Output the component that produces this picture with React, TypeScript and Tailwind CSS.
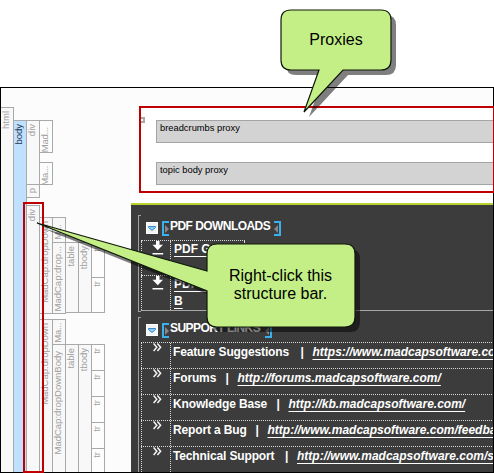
import type { ReactNode } from "react";

type BarProps = { label: string; h: string; tone?: string; className?: string; text?: string };

function Bar({ label, h, tone = "bg-[#f8f8f8] text-[#a0a0a0]", className = "", text = "" }: BarProps) {
  return (
    <div
      className={`flex w-[14px] shrink-0 items-start border border-[#a9a9a9] pt-[3px] ${h} ${tone} ${className}`}
    >
      <span className={`-ml-px rotate-180 text-[9.5px] leading-[12px] whitespace-nowrap [writing-mode:vertical-rl] ${text}`}>{label}</span>
    </div>
  );
}

const white = "bg-[#fdfdfd] text-[#a0a0a0]";
const tight = "tracking-[-0.3px]";

function Structure() {
  return (
    <div className="flex h-[384px] w-[130px] shrink-0 items-start overflow-hidden pt-[19px]">
      <Bar label="html" h="h-[380px]" className="-ml-px" />
      <Bar label="body" h="h-[380px]" tone="bg-[#c0e0ff] text-[#22384e]" className="mt-[13px] -ml-px" />
      <div className="mt-[13px] -ml-px flex flex-col">
        <Bar label="div" h="h-[65px]" />
        <Bar label="p" h="h-[14px]" className="-mt-px" />
        <Bar label="div" h="h-[280px]" className="mt-[7px]" />
      </div>
      <div className="mt-[13px] -ml-px flex flex-col">
        <Bar label="Mad..." h="h-[33px]" tone={white} text="mt-[3px] tracking-[-0.2px]" />
        <Bar label="Ma..." h="h-[23px]" tone={white} className="mt-[9px]" text={tight} />
        <Bar label="MadCap:dropDown" h="h-[97px]" className="mt-[32px]" />
        <Bar label="MadCap:dropDown" h="h-[170px]" className="mt-[5px]" />
      </div>
      <div className="mt-[110px] -ml-px flex flex-col">
        <Bar label="M..." h="h-[26px]" text="mt-[3px]" />
        <Bar label="MadCap:drop..." h="h-[72px]" className="-mt-px" />
        <Bar label="Ma..." h="h-[26px]" className="mt-[5px]" text={tight} />
        <Bar label="MadCap:dropDownBody" h="h-[150px]" className="-mt-px" text="mt-[3px]" />
      </div>
      <div className="mt-[135px] -ml-px flex flex-col">
        <Bar label="table" h="h-[71px]" />
        <Bar label="table" h="h-[150px]" className="mt-[31px]" />
      </div>
      <div className="mt-[135px] -ml-px flex flex-col">
        <Bar label="tbody" h="h-[71px]" />
        <Bar label="tbody" h="h-[150px]" className="mt-[31px]" />
      </div>
      <div className="mt-[135px] -ml-px flex flex-col">
        <Bar label="tr" h="h-[36px]" tone={white} />
        <Bar label="tr" h="h-[36px]" tone={white} className="-mt-px" />
        <Bar label="tr" h="h-[27px]" tone={white} className="mt-[31px]" />
        <Bar label="tr" h="h-[27px]" tone={white} className="-mt-px" />
        <Bar label="tr" h="h-[27px]" tone={white} className="-mt-px" />
        <Bar label="tr" h="h-[27px]" tone={white} className="-mt-px" />
        <Bar label="tr" h="h-[27px]" tone={white} className="-mt-px" />
      </div>
    </div>
  );
}

function Proxy({ children, className }: { children: ReactNode; className: string }) {
  return (
    <div className={`ml-[15px] h-[23px] border border-r-0 border-[#a4a4a4] bg-[#d3d3d3] pl-[3px] text-[9.33px] leading-[15px] text-black ${className}`}>
      {children}
    </div>
  );
}

function Heading({ children, width }: { children: string; width: string }) {
  return (
    <div className="flex h-[25px] items-start pt-[6px] pl-[5px]">
      <svg className="mt-px mr-[4px] shrink-0" width="12" height="12" viewBox="0 0 12 12">
        <rect x="0.5" y="0.5" width="11" height="11" fill="#f4f4f4" stroke="#fff" />
        <path d="M2.5 4.5H9.5V5.5L6 8.5L2.5 5.5Z" fill="#8ccdf5" stroke="#2a7fc9" strokeWidth="0.9" />
      </svg>
      <div className="flex h-[15px] w-[7px] shrink-0 items-center border-2 border-r-0 border-[#3ab0ee]">
        <svg width="5" height="8" viewBox="0 0 5 8"><path d="M1 0L5 4L1 8Z" fill="#858585" /></svg>
      </div>
      <span className={`-mt-px shrink-0 pl-px text-[12px] leading-[13px] font-bold tracking-[-0.55px] whitespace-nowrap text-white ${width}`}>{children}</span>
      <div className="flex h-[15px] w-[7px] shrink-0 items-center border-2 border-l-0 border-[#3ab0ee]">
        <svg width="5" height="8" viewBox="0 0 5 8"><path d="M4 0L0 4L4 8Z" fill="#858585" /></svg>
      </div>
    </div>
  );
}

function PdfRow({ children }: { children: ReactNode }) {
  return (
    <div className="flex h-[35px] w-[104px] border-t border-dotted border-[#d8d8d8]">
      <div className="w-[29px] shrink-0 border-l border-dotted border-[#d8d8d8] pl-[10px]">
        <svg width="12" height="14" viewBox="0 0 12 14">
          <path d="M4 0H7.5V3.7H11L5.75 9.2L0.5 3.7H4ZM0.5 12H11.2V13.4H0.5Z" fill="#fff" />
        </svg>
      </div>
      <div className="grow border-x border-dotted border-[#d8d8d8] pl-[3px] text-[12px] leading-[17px] font-bold whitespace-nowrap text-white">{children}</div>
    </div>
  );
}

const under = "underline decoration-1 underline-offset-[3px]";

const links = [
  ["Feature Suggestions", "https://www.madcapsoftware.com/bugs", "w-[117.5px]"],
  ["Forums", "http://forums.madcapsoftware.com/", "w-[42.5px]"],
  ["Knowledge Base", "http://kb.madcapsoftware.com/", "w-[93.5px]"],
  ["Report a Bug", "http://www.madcapsoftware.com/feedback", "w-[72.5px]"],
  ["Technical Support", "http://www.madcapsoftware.com/support", "w-[102px]"],
];

function LinkRow({ name, url, width }: { name: string; url: string; width: string }) {
  return (
    <div className="flex h-[26px] border-t border-dotted border-[#d8d8d8]">
      <div className="w-[29px] shrink-0 border-l border-dotted border-[#d8d8d8] pl-[11px]">
        <svg width="9" height="9" viewBox="0 0 9 9">
          <path d="M0.6 0.6L3.8 4.3L0.6 8M4.4 0.6L7.6 4.3L4.4 8" fill="none" stroke="#f4f4f4" strokeWidth="1.5" />
        </svg>
      </div>
      <div className="flex grow border-l border-dotted border-[#d8d8d8] pt-[2px] pl-[2px] text-[12px] leading-[14px] font-bold whitespace-pre text-white">
        <span className={`shrink-0 tracking-[-0.14px] ${width}`}>{name}</span>
        <span className="w-[22px] shrink-0 pl-[10px]">|</span>
        <span className={`italic ${under}`}>{url}</span>
      </div>
    </div>
  );
}

function Callouts() {
  const top = "M291 10H381Q391 10 391 20V60Q391 70 381 70H343L304 112L319 70H291Q281 70 281 60V20Q281 10 291 10Z";
  const low = "M217 244H345Q355 244 355 254V317Q355 327 345 327H217Q207 327 207 317V291L37 223L207 271V254Q207 244 217 244Z";
  return (
    <>
      <svg className="absolute inset-0" width="494" height="473" viewBox="0 0 494 473">
        {[top, low].map((d) => (
          <g key={d}>
            <path d={d} transform="translate(5 5)" fill="#000" fillOpacity="0.5" />
            <path d={d} fill="#c3ef86" stroke="#10180a" strokeWidth="1.2" />
          </g>
        ))}
      </svg>
      <div className="absolute top-[31px] left-[281px] w-[110px] text-center text-[16px] leading-[18px] text-black">Proxies</div>
      <div className="absolute top-[267px] left-[207px] w-[147px] text-center text-[16px] leading-[18px] text-black">
        Right-click this
        <br />
        structure bar.
      </div>
    </>
  );
}

export default function App() {
  return (
    <div className="relative h-[473px] w-[494px] overflow-hidden bg-white pt-[87px] font-['Liberation_Sans',Arial,sans-serif]">
      <div className="flex h-[386px] overflow-hidden border border-black bg-[#fcfcfc]">
        <Structure />
        <main className="mt-[17px] flex w-[362px] shrink-0 flex-col overflow-hidden bg-white">
          <section className="mt-px ml-[8px] h-[87px] shrink-0 border-2 border-r-0 border-[#c00000]">
            <div className="flex items-start">
              <div className="mt-[9px] h-[6px] w-[4px] border-2 border-l-0 border-[#a9a9a9]" />
              <div className="-ml-[4px] grow pt-[12px]">
                <Proxy className="">breadcrumbs proxy</Proxy>
                <Proxy className="mt-[19px]">topic body proxy</Proxy>
              </div>
            </div>
          </section>
          <section className="mt-[10px] min-h-0 grow overflow-hidden border-t-2 border-[#b9d22e] bg-[#3c3c3c] pl-[7px]">
            <div className="mt-[10px] flex h-[97px]">
              <div className="w-[3px] shrink-0 border border-r-0 border-[#a0a0a0]" />
              <div className="grow">
                <Heading width="w-[105px]">PDF DOWNLOADS</Heading>
                <PdfRow>
                  <span className={under}>PDF Guide</span>
                </PdfRow>
                <PdfRow>
                  <span className={under}>PDF Guide</span>
                  <br />
                  <span className={under}>B</span>
                </PdfRow>
                <div className="h-px bg-[#a8a8a8]" />
              </div>
            </div>
            <div className="mt-[5px] flex h-[170px]">
              <div className="w-[3px] shrink-0 border border-r-0 border-[#a0a0a0]" />
              <div className="grow">
                <Heading width="w-[96px]">SUPPORT LINKS</Heading>
                {links.map(([name, url, width]) => (
                  <LinkRow key={name} name={name} url={url} width={width} />
                ))}
              </div>
            </div>
          </section>
        </main>
      </div>
      <div className="absolute top-[202px] left-[23px] h-[271px] w-[21px] border-2 border-[#c00000]" />
      <div className="absolute top-[106px] left-[493px] h-[87px] w-px bg-[#c00000]" />
      <Callouts />
    </div>
  );
}
